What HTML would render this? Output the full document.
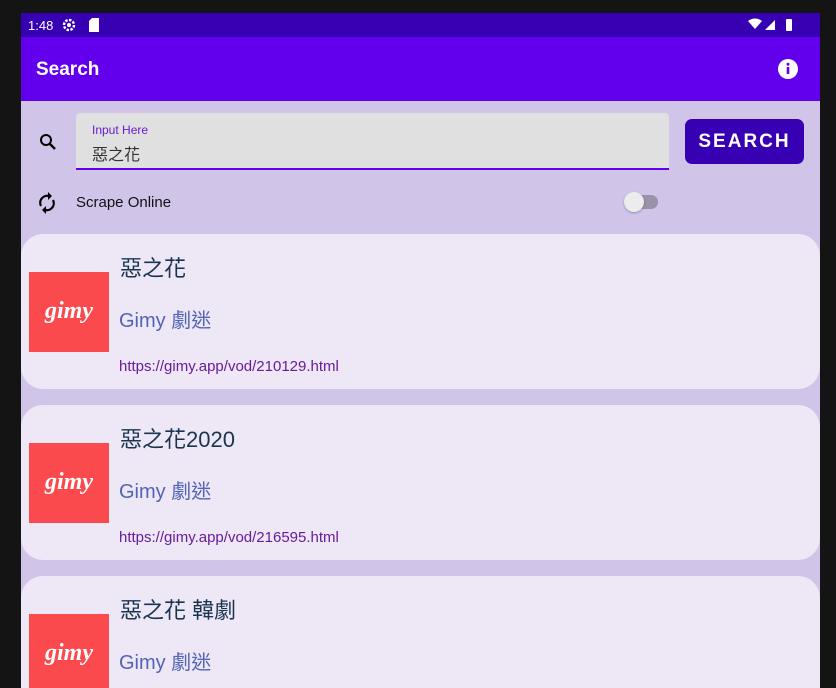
<!DOCTYPE html>
<html><head><meta charset="utf-8"><style>
*{margin:0;padding:0;box-sizing:border-box}
body{width:836px;height:688px;background:#141414;overflow:hidden;font-family:"Liberation Sans","Noto Sans CJK TC",sans-serif;position:relative}
.scr{position:absolute;left:21px;top:13px;width:799px;height:675px;background:#d1c4e9;overflow:hidden}
.sb{position:absolute;left:0;top:0;width:799px;height:24px;background:#3700b3;color:#fff;font-size:13px}
.ab{position:absolute;left:0;top:24px;width:799px;height:64px;background:#6200ee;color:#fff}
.card{position:absolute;left:0;width:799px;height:155px;background:#ede7f6;border-radius:22px}
.logo{position:absolute;left:8px;top:38px;width:80px;height:80px;background:#fa4a4e;color:#fff;font-style:italic;font-weight:bold;font-size:24px;text-align:center;line-height:78px;font-family:"Liberation Serif",serif;letter-spacing:0}
.t{position:absolute;left:99px;top:17px;font-size:22px;color:#1b3550}
.s{position:absolute;left:98px;top:70px;font-size:20px;color:#5363b5}
.u{position:absolute;left:98px;top:124px;font-size:15px;color:#6a1b9a}
</style></head><body>
<div class="scr">
<div class="sb"><span style="position:absolute;left:7px;top:5px">1:48</span>
<svg style="position:absolute;left:40px;top:4px" width="16" height="16" viewBox="0 0 16 16"><circle cx="8" cy="8" r="5" fill="none" stroke="#fff" stroke-width="2.4" stroke-dasharray="2.5 1.4"/><circle cx="8" cy="8" r="2" fill="#fff"/></svg>
<svg style="position:absolute;left:68px;top:5px" width="11" height="14" viewBox="0 0 11 14"><path d="M3 0H10V14H0V3Z" fill="#fff"/></svg>
<svg style="position:absolute;left:727px;top:5px" width="50" height="14" viewBox="0 0 50 14"><path d="M0 3Q7-2 14 3L7 11Z" fill="#fff"/><path d="M17 12L27 2V12Z" fill="#fff"/><rect x="38" y="1" width="6" height="12" rx="1" fill="#fff"/></svg>
</div>
<div class="ab"><span style="position:absolute;left:15px;top:22px;font-size:19px;font-weight:bold">Search</span>
<svg style="position:absolute;left:756px;top:21px" width="22" height="22" viewBox="0 0 22 22"><circle cx="11" cy="11" r="10" fill="#fff"/><rect x="9.7" y="9" width="2.6" height="7" fill="#6200ee"/><circle cx="11" cy="6.3" r="1.5" fill="#6200ee"/></svg>
</div>
<svg style="position:absolute;left:17px;top:119px" width="20" height="20" viewBox="0 0 20 20"><circle cx="8" cy="8" r="5" fill="none" stroke="#000" stroke-width="2"/><path d="M11.5 11.5L17 17" stroke="#000" stroke-width="2.4"/></svg>
<div style="position:absolute;left:55px;top:100px;width:593px;height:57px;background:#e0e0e0;border-radius:4px 4px 0 0;border-bottom:2px solid #6200ee">
<span style="position:absolute;left:16px;top:10px;font-size:12px;color:#6a1bd0">Input Here</span>
<span style="position:absolute;left:16px;top:28px;font-size:16px;color:#333">惡之花</span></div>
<div style="position:absolute;left:664px;top:106px;width:119px;height:45px;background:#3700b3;border-radius:7px;color:#fff;font-size:19px;letter-spacing:2px;text-align:center;line-height:46px;font-weight:bold">SEARCH</div>
<svg style="position:absolute;left:16px;top:178px" width="20" height="24" viewBox="0 0 20 24"><path d="M4 15A7 7 0 0 1 12 5" fill="none" stroke="#000" stroke-width="2.2"/><path d="M11 1L15 5L11 9Z" fill="#000"/><path d="M16 9A7 7 0 0 1 8 19" fill="none" stroke="#000" stroke-width="2.2"/><path d="M9 15L5 19L9 23Z" fill="#000"/></svg>
<span style="position:absolute;left:55px;top:181px;font-size:15px;color:#111">Scrape Online</span>
<div style="position:absolute;left:605px;top:182px;width:32px;height:14px;border-radius:7px;background:#9a92a8"></div>
<div style="position:absolute;left:603px;top:179px;width:20px;height:20px;border-radius:50%;background:#ececec;box-shadow:0 1px 2px rgba(0,0,0,.3)"></div>
<div class="card" style="top:221px"><div class="logo">gimy</div><div class="t">惡之花</div><div class="s">Gimy 劇迷</div><div class="u">https://gimy.app/vod/210129.html</div></div>
<div class="card" style="top:392px"><div class="logo">gimy</div><div class="t">惡之花2020</div><div class="s">Gimy 劇迷</div><div class="u">https://gimy.app/vod/216595.html</div></div>
<div class="card" style="top:563px"><div class="logo">gimy</div><div class="t">惡之花 韓劇</div><div class="s">Gimy 劇迷</div></div>
</div>
</body></html>
